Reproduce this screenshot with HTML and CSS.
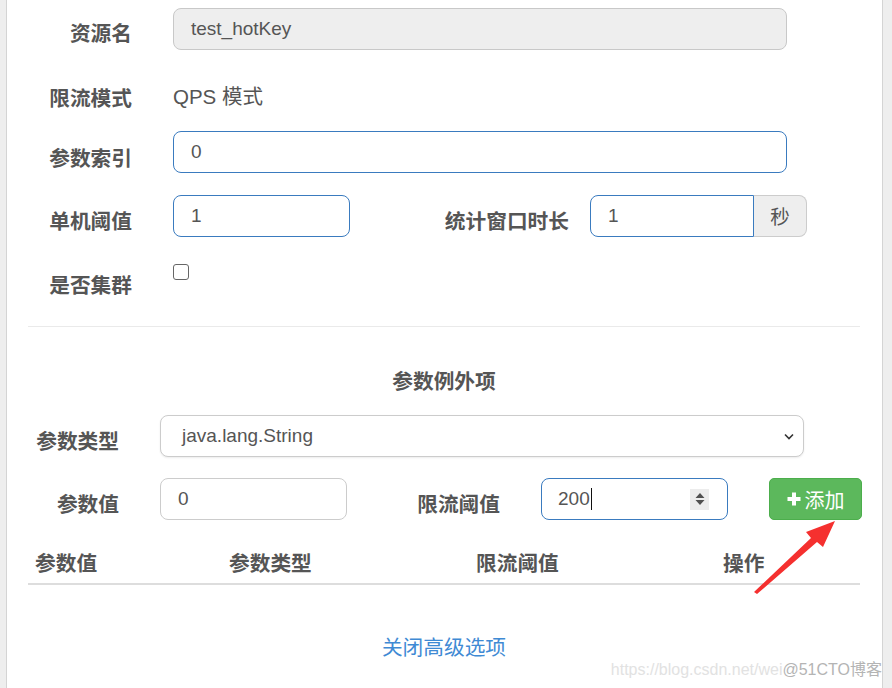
FILE: index.html
```html
<!DOCTYPE html>
<html lang="zh-CN">
<head>
<meta charset="utf-8">
<title>热点规则</title>
<link rel="stylesheet" href="styles.css">
</head>
<body>
<div class="panel">
  <div class="content">
    <div class="row row-a">
      <label class="lbl">资源名</label>
      <div class="field disabled wide">test_hotKey</div>
    </div>
    <div class="row row-b">
      <label class="lbl lbl-b">限流模式</label>
      <div class="static">QPS 模式</div>
    </div>
    <div class="row row-c">
      <label class="lbl">参数索引</label>
      <div class="field focus wide">0</div>
    </div>
    <div class="row row-d">
      <label class="lbl">单机阈值</label>
      <div class="field focus narrow">1</div>
      <label class="lbl lbl-win">统计窗口时长</label>
      <div class="group">
        <div class="field focus group-input">1</div>
        <div class="addon">秒</div>
      </div>
    </div>
    <div class="row row-e">
      <label class="lbl lbl-e">是否集群</label>
      <span class="checkbox"></span>
    </div>

    <hr class="divider">

    <div class="sec-title">参数例外项</div>

    <div class="row row-f">
      <label class="lbl lbl2">参数类型</label>
      <div class="field select">
        <span>java.lang.String</span>
        <svg class="chev" width="10" height="7" viewBox="0 0 10 7"><path d="M1 1.5 L5 5.5 L9 1.5" fill="none" stroke="#333" stroke-width="1.6"/></svg>
      </div>
    </div>
    <div class="row row-g">
      <label class="lbl lbl2">参数值</label>
      <div class="field plain half">0</div>
      <label class="lbl lbl-thr">限流阈值</label>
      <div class="field focus half num">
        <span class="val">200<span class="caret"></span></span>
        <span class="spin">
          <svg width="12" height="16" viewBox="0 0 12 16"><path d="M6 2 L10.5 7 H1.5 Z M6 14 L10.5 9 H1.5 Z" fill="#505050"/></svg>
        </span>
      </div>
      <button class="btn-add">
        <svg width="14" height="14" viewBox="0 0 14 14"><path d="M7 0.5 V13.5 M0.5 7 H13.5" stroke="#fff" stroke-width="4"/></svg>
        <span>添加</span>
      </button>
    </div>

    <table class="tbl">
      <thead>
        <tr>
          <th class="c1">参数值</th>
          <th class="c2">参数类型</th>
          <th class="c3">限流阈值</th>
          <th class="c4">操作</th>
        </tr>
      </thead>
    </table>

    <div class="link-row"><a class="link" href="#">关闭高级选项</a></div>
  </div>

  <svg class="arrow" width="892" height="688" viewBox="0 0 892 688">
    <polygon points="754,592 811,538 806,532 835,521 823,547 817,542 757,594" fill="#f5302f"/>
  </svg>

  <div class="watermark"><span class="wm1">https://blog.csdn.net/wei</span><span class="wm2">@51CTO博客</span></div>
</div>
</body>
</html>
```

FILE: styles.css
```css
* { box-sizing: border-box; }
html, body { margin: 0; padding: 0; }
body {
  background: #eeeeee;
  width: 892px;
  height: 688px;
  overflow: hidden;
  font-family: "Liberation Sans", "Noto Sans CJK SC", sans-serif;
  color: #555;
}
.panel {
  position: relative;
  margin-left: 6px;
  width: 877px;
  height: 688px;
  background: #fff;
  border-left: 1px solid #d4d4d4;
  border-right: 1px solid #d4d4d4;
}
.content {
  padding: 8px 0 0 21px;
  width: 853px;
}
.row {
  display: flex;
  align-items: flex-start;
  height: 42px;
}
.lbl {
  flex: none;
  width: 104px;
  margin-right: 41px;
  text-align: right;
  font-family: "Noto Sans CJK SC", sans-serif;
  font-weight: bold;
  font-size: 20.7px;
  line-height: 42px;
  height: 42px;
  padding-top: 4px;
  box-sizing: content-box;
  color: #555;
  white-space: nowrap;
}
.field {
  flex: none;
  height: 42px;
  border: 1px solid #ccc;
  border-radius: 8px;
  padding: 0 17px;
  font-size: 19px;
  line-height: 40px;
  color: #555;
  background: #fff;
}
.field.disabled { background: #eeeeee; border-color: #c8c8c8; }
.field.focus { border-color: #3a7bbf; }
.wide { width: 614px; }
.narrow { width: 177px; }

.row-a { margin-bottom: 21px; }
.row-a .lbl { padding-top: 3px; }
.row-b { height: 47px; margin-bottom: 13px; }
.lbl-b { line-height: 26px; height: 26px; padding-top: 13px; }
.static {
  padding-top: 13px;
  line-height: 26px;
  font-size: 20.5px;
  color: #555;
  font-family: "Liberation Sans", "Noto Sans CJK SC", sans-serif;
}
.row-c { margin-bottom: 22px; }
.row-c .lbl { padding-top: 5px; }
.row-d { margin-bottom: 27px; }
.lbl-win { width: 219px; margin-right: 21px; }
.group { display: flex; flex: none; }
.group-input {
  width: 164px;
  border-top-right-radius: 0;
  border-bottom-right-radius: 0;
}
.addon {
  width: 53px;
  height: 42px;
  background: #eeeeee;
  border: 1px solid #ccc;
  border-left: none;
  border-radius: 0 8px 8px 0;
  text-align: center;
  line-height: 40px;
  font-family: "Noto Sans CJK SC", sans-serif;
  font-size: 19.5px;
  color: #555;
}
.row-e { height: 40px; }
.lbl-e { line-height: 28px; height: 28px; padding-top: 6px; }
.checkbox {
  width: 16px;
  height: 16px;
  border: 1px solid #666;
  border-radius: 3px;
  background: #fff;
}
.divider {
  margin: 22px 0 0 0;
  width: 832px;
  border: none;
  border-top: 1px solid #eaeaea;
  height: 0;
}
.sec-title {
  width: 832px;
  margin-top: 38px;
  height: 30px;
  line-height: 30px;
  text-align: center;
  font-family: "Noto Sans CJK SC", sans-serif;
  font-weight: bold;
  font-size: 20.7px;
  color: #555;
  margin-bottom: 20px;
}
.lbl2 { width: 91px; }
.row-f { margin-bottom: 21px; }
.select {
  width: 644px;
  display: flex;
  align-items: center;
  justify-content: space-between;
  padding: 0 9px 0 21px;
  box-shadow: 0 1px 2px rgba(0,0,0,0.08);
}
.half { width: 187px; }
.plain { padding-left: 17px; }
.lbl-thr { width: 153px; }
.num {
  display: flex;
  align-items: center;
  justify-content: space-between;
  padding: 0 18px 0 16px;
}
.val { display: flex; align-items: center; }
.caret {
  display: inline-block;
  width: 1px;
  height: 22px;
  background: #111;
  margin-left: 1px;
}
.spin {
  width: 19px;
  height: 21px;
  background: #ececec;
  display: flex;
  align-items: center;
  justify-content: center;
}
.btn-add {
  flex: none;
  margin-left: 41px;
  width: 93px;
  height: 42px;
  border: 1px solid #4cae4c;
  border-radius: 5px;
  background: #5cb85c;
  color: #fff;
  font-family: "Noto Sans CJK SC", sans-serif;
  font-size: 20px;
  display: flex;
  align-items: center;
  justify-content: center;
  gap: 4px;
  padding: 0;
}
.tbl {
  margin-top: 23px;
  width: 832px;
  border-collapse: collapse;
  table-layout: fixed;
}
.tbl th {
  text-align: left;
  padding: 5px 7px 7px;
  height: 40px;
  line-height: 28px;
  font-family: "Noto Sans CJK SC", sans-serif;
  font-weight: bold;
  font-size: 20.7px;
  color: #555;
  border-bottom: 2px solid #dddddd;
}
.c1 { width: 194px; }
.c2 { width: 247px; }
.c3 { width: 247px; }
.link-row {
  width: 832px;
  margin-top: 46px;
  text-align: center;
  line-height: 30px;
}
.link {
  font-family: "Noto Sans CJK SC", sans-serif;
  font-size: 20.7px;
  color: #3f8ad4;
  text-decoration: none;
}
.arrow {
  position: absolute;
  left: -7px;
  top: 0;
  pointer-events: none;
}
.watermark {
  position: absolute;
  right: 0;
  top: 658px;
  font-size: 16px;
  line-height: 24px;
  white-space: nowrap;
}
.wm1 { color: #e2e2e2; }
.wm2 { color: #b4b4b4; font-family: "Liberation Sans", "Noto Sans CJK SC", sans-serif; }
```
